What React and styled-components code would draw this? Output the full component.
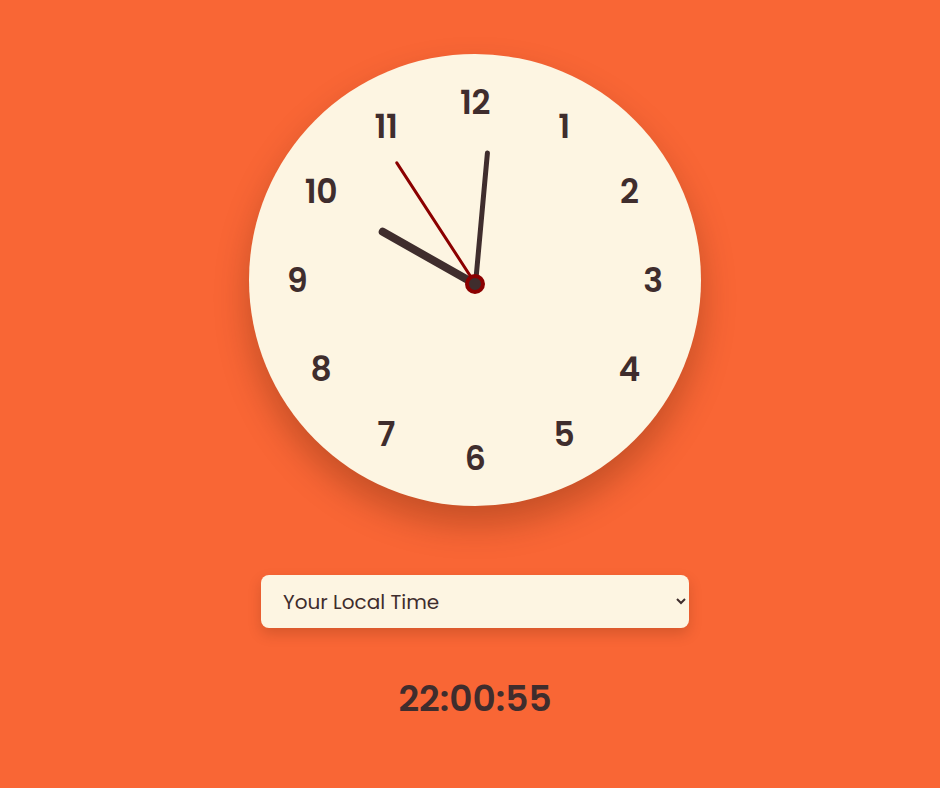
import React from "react";
import styled, { createGlobalStyle } from "styled-components";

const GlobalStyle = createGlobalStyle`
  html, body {
    margin: 0;
    padding: 0;
    background-color: #f96635;
  }
  body {
    font-family: "Poppins", Inter, "Noto Sans", sans-serif;
    color: #3f2d2d;
  }
`;

const Page = styled.main`
  display: flex;
  flex-direction: column;
  align-items: center;
  min-height: 100vh;
  padding: 54px 0 0 10px;
  box-sizing: border-box;
`;

const Face = styled.div`
  position: relative;
  width: 452px;
  height: 452px;
  border-radius: 50%;
  background-color: #fdf5e2;
  box-shadow: 0 18px 34px rgba(60, 20, 0, 0.28);
`;

const Number = styled.span`
  position: absolute;
  transform: translate(-50%, -50%);
  font-size: 33px;
  font-weight: 600;
  line-height: 1;
  letter-spacing: -0.5px;
  color: #3f2d2d;
`;

const Hand = styled.div`
  position: absolute;
  left: calc(50% - ${(p) => p.$width / 2}px);
  top: calc(50% + 4px - ${(p) => p.$length}px);
  width: ${(p) => p.$width}px;
  height: ${(p) => p.$length}px;
  border-radius: ${(p) => p.$width / 2}px;
  background-color: ${(p) => p.$color};
  transform-origin: 50% 100%;
`;

const Pin = styled.div`
  position: absolute;
  left: 50%;
  top: calc(50% + 4px);
  width: 12px;
  height: 12px;
  border: 4px solid #8b0000;
  border-radius: 50%;
  background-color: #3f2d2d;
  transform: translate(-50%, -50%);
`;

const ZoneSelect = styled.select`
  margin-top: 69px;
  width: 428px;
  height: 53px;
  padding: 0 13px 0 18px;
  border: none;
  border-radius: 8px;
  background-color: #fdf5e2;
  box-shadow: 0 6px 14px rgba(60, 20, 0, 0.18);
  font-family: inherit;
  font-size: 20px;
  color: #3f2d2d;
  outline: none;
`;

const Digital = styled.div`
  margin-top: 48px;
  font-size: 36px;
  font-weight: 600;
  line-height: 46px;
  color: #3f2d2d;
`;

const RADIUS = 178;
const numbers = Array.from({ length: 12 }, (_, i) => i + 1);

const hands = [
  { key: "hour", length: 110, width: 8, color: "#3f2d2d", angle: 299.5 },
  { key: "minute", length: 134, width: 5, color: "#3f2d2d", angle: 5.2 },
  { key: "second", length: 146, width: 3, color: "#8b0000", angle: 327 },
];

export default function App() {
  return (
    <>
      <GlobalStyle />
      <Page>
        <Face>
          {numbers.map((n) => {
            const rad = (n * 30 * Math.PI) / 180;
            return (
              <Number
                key={n}
                style={{
                  left: 226 + RADIUS * Math.sin(rad),
                  top: 226 - RADIUS * Math.cos(rad),
                }}
              >
                {n}
              </Number>
            );
          })}
          {hands.map((h) => (
            <Hand
              key={h.key}
              $length={h.length}
              $width={h.width}
              $color={h.color}
              style={{ transform: `rotate(${h.angle}deg)` }}
            />
          ))}
          <Pin />
        </Face>
        <ZoneSelect defaultValue="local">
          <option value="local">Your Local Time</option>
          <option value="utc">UTC</option>
          <option value="ny">New York</option>
          <option value="london">London</option>
          <option value="tokyo">Tokyo</option>
        </ZoneSelect>
        <Digital>22:00:55</Digital>
      </Page>
    </>
  );
}
